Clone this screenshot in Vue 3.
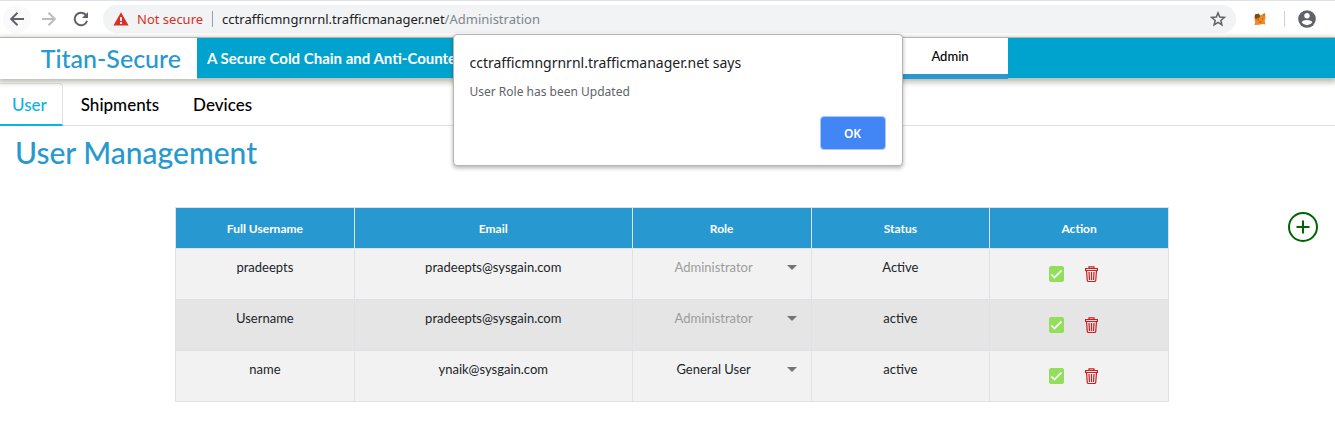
<script setup>
import { ref } from 'vue'

const tabs = ['User', 'Shipments', 'Devices']
const activeTab = ref('User')
const roles = ['Administrator', 'General User']
const users = ref([
  { name: 'pradeepts', email: 'pradeepts@sysgain.com', role: 'Administrator', status: 'Active', locked: true, confirmed: true },
  { name: 'Username', email: 'pradeepts@sysgain.com', role: 'Administrator', status: 'active', locked: true, confirmed: true },
  { name: 'name', email: 'ynaik@sysgain.com', role: 'General User', status: 'active', locked: false, confirmed: true }
])
const dialogOpen = ref(true)
</script>

<template>
  <div class="window">
    <div class="toolbar">
      <button class="tool back" aria-label="Back">
        <svg width="16" height="16" viewBox="0 0 16 16" fill="none" stroke="#5f6368" stroke-width="2"><path d="M15 8H2.5M8.5 1.7 2.2 8l6.3 6.3" /></svg>
      </button>
      <button class="tool" aria-label="Forward">
        <svg width="16" height="16" viewBox="0 0 16 16" fill="none" stroke="#babcbe" stroke-width="2"><path d="M1 8h12.5M7.5 1.7 13.8 8l-6.3 6.3" /></svg>
      </button>
      <button class="tool" aria-label="Reload">
        <svg width="16" height="16" viewBox="0 0 16 16"><path d="M13.2 4.3A6.3 6.3 0 1 0 14.1 9.8" fill="none" stroke="#5f6368" stroke-width="2" /><path d="M15 1v6H9z" fill="#5f6368" /></svg>
      </button>
      <div class="address">
        <svg class="warn" width="16" height="14" viewBox="0 0 16 14"><path d="M8 .3 15.6 13.5H.4z" fill="#d93025" /><path d="M7.1 5h1.8v4H7.1zM7.1 10.1h1.8v1.8H7.1z" fill="#fff" /></svg>
        <span class="insecure">Not secure</span>
        <span class="bar"></span>
        <span class="url">cctrafficmngrnrnl.trafficmanager.net<span class="path">/Administration</span></span>
        <button class="star" aria-label="Bookmark this page">
          <svg width="16" height="16" viewBox="0 0 16 16" fill="none" stroke="#5f6368" stroke-width="1.5"><path d="m8 1.9 1.7 4.2 4.6.35-3.5 2.950 1.100 4.400L8 11.400l-3.900 2.400 1.100-4.400-3.500-2.950 4.600-.35z" /></svg>
        </button>
      </div>
      <button class="tool fox" aria-label="Wallet extension">
        <svg width="12" height="12" viewBox="0 0 12 12"><path d="M1 1.5 4.5 1l2 1.500L11 0l.5 5-.8 3 .8 3.500-3-.5-3 .8-5 .2L1.200 9 .5 6z" fill="#f08a24" /><path d="m1 1.500 3.500-1L6.500 3 5 5 2 6 .6 4.500z" fill="#7b4a22" /><path d="m8.500 1.300 2.500-1v3L9 3.500z" fill="#d9701c" /><path d="M3.500 6.500h1.300v1H3.500zM8 5.500h1.200v1H8zM5.500 8.500h2v1h-2z" fill="#8a4b1c" /></svg>
      </button>
      <span class="divider"></span>
      <button class="tool profile" aria-label="Profile">
        <svg width="18" height="18" viewBox="0 0 18 18"><circle cx="9" cy="9" r="8.800" fill="#5f6368" /><circle cx="9" cy="5.700" r="2.700" fill="#fff" /><path d="M3.600 12.300C4.300 10.600 7 9.900 9 9.900s4.700.7 5.400 2.400A6.500 6.500 0 0 1 9 15.200a6.500 6.500 0 0 1-5.400-2.900z" fill="#fff" /></svg>
      </button>
    </div>

    <header class="banner">
      <div class="brand">Titan-Secure</div>
      <div class="tagline">A Secure Cold Chain and Anti-Counterfeit</div>
      <button class="account">Admin</button>
    </header>

    <nav class="tabs">
      <button v-for="tab in tabs" :key="tab" class="tab" :class="{ active: tab === activeTab }" @click="activeTab = tab">{{ tab }}</button>
    </nav>

    <main class="content">
      <h1>User Management</h1>
      <div class="board">
        <table>
          <thead>
            <tr>
              <th class="narrow">Full Username</th>
              <th class="wide">Email</th>
              <th class="narrow">Role</th>
              <th class="narrow">Status</th>
              <th class="narrow">Action</th>
            </tr>
          </thead>
          <tbody>
            <tr v-for="(user, i) in users" :key="i">
              <td>{{ user.name }}</td>
              <td>{{ user.email }}</td>
              <td>
                <div class="role">
                  <select v-model="user.role" :disabled="user.locked" :aria-label="'Role of ' + user.name">
                    <option v-for="role in roles" :key="role">{{ role }}</option>
                  </select>
                  <svg width="10" height="5" viewBox="0 0 10 5"><path d="M0 0h10L5 5z" fill="#757575" /></svg>
                </div>
              </td>
              <td>{{ user.status }}</td>
              <td>
                <div class="actions">
                  <label class="check">
                    <input v-model="user.confirmed" type="checkbox" :aria-label="'Confirm ' + user.name" />
                    <svg v-if="user.confirmed" width="15" height="16" viewBox="0 0 15 16" fill="none" stroke="#f2f2f2" stroke-width="1.8"><path d="m2.300 8.300 3.200 3.200 7-7" /></svg>
                  </label>
                  <button class="trash" :aria-label="'Delete ' + user.name">
                    <svg width="13" height="16" viewBox="0 0 13 16" fill="none" stroke="#cc1f1f" stroke-width="1.2"><path d="M4 2V.8h5V2M.6 2.500h11.800v2H.6zM1.500 4.500l.8 10.200.8.8h6.800l.8-.8.8-10.200" /><path d="m4 6 .5 8M6.500 6v8M9 6l-.5 8" /></svg>
                  </button>
                </div>
              </td>
            </tr>
          </tbody>
        </table>
        <button class="add" aria-label="Add user">
          <svg width="30" height="30" viewBox="0 0 30 30" fill="none" stroke="#006400" stroke-width="2"><circle cx="15" cy="15" r="14" /><path d="M15 8.500v13M8.500 15h13" /></svg>
        </button>
      </div>
    </main>

    <div v-if="dialogOpen" class="dialog" role="alertdialog" aria-labelledby="dialog-title" aria-describedby="dialog-text">
      <div id="dialog-title" class="dialog-title">cctrafficmngrnrnl.trafficmanager.net says</div>
      <p id="dialog-text">User Role has been Updated</p>
      <button class="ok" @click="dialogOpen = false">OK</button>
    </div>
  </div>
</template>

<style>
body {
  margin: 0;
  background: #fff;
}
</style>

<style scoped>
* {
  box-sizing: border-box;
}
.window {
  position: relative;
  font-family: Lato, "Liberation Sans", sans-serif;
  color: #212529;
}
button {
  font: inherit;
  padding: 0;
  border: 0;
  background: none;
  color: inherit;
}
svg {
  display: block;
  flex: none;
}
.toolbar {
  display: flex;
  align-items: center;
  height: 38px;
  padding: 0 19px 0 3px;
  border-top: 1px solid #dee1e6;
  border-bottom: 1px solid #b0b0b0;
  font-family: "Noto Sans", sans-serif;
  font-size: 13px;
}
.tool {
  display: grid;
  place-items: center;
  width: 28px;
  height: 28px;
  margin-right: 4px;
  border-radius: 50%;
}
.back {
  background: #fafafa;
}
.address {
  display: flex;
  flex: 1;
  align-items: center;
  height: 28px;
  margin-left: 4px;
  padding: 0 10px;
  border-radius: 14px;
  background: #f1f3f4;
  white-space: nowrap;
}
.insecure {
  margin-left: 8px;
  color: #d93025;
}
.bar {
  width: 1px;
  height: 16px;
  margin: 0 9px;
  background: #9aa0a6;
}
.url {
  color: #202124;
}
.path {
  color: #80868b;
}
.star {
  margin-left: auto;
}
.fox {
  margin: 0 10px;
}
.divider {
  width: 1px;
  height: 16px;
  background: #cfd1d4;
}
.profile {
  width: 18px;
  margin: 0 0 0 13px;
}
.banner {
  position: relative;
  display: flex;
  height: 40px;
  background: #00a2ce;
  box-shadow: 0 2px 6px 2px #b8b8ac;
}
.brand {
  width: 197px;
  height: 41px;
  padding-right: 16px;
  background: #fff;
  color: #2899d0;
  font-size: 25px;
  font-weight: 500;
  line-height: 40px;
  text-align: right;
}
.tagline {
  flex: 1;
  padding-left: 10px;
  color: #fff;
  font-size: 15px;
  font-weight: 700;
  line-height: 40px;
  white-space: nowrap;
}
.account {
  width: 116px;
  height: 41px;
  margin-right: 327px;
  border-bottom: 5px solid #2899d0;
  background: #fff;
  color: #000;
  font-size: 13px;
  font-weight: 500;
}
.tabs {
  display: flex;
  height: 48px;
  padding-top: 5px;
  border-bottom: 1px solid #dee2e6;
}
.tab {
  height: 43px;
  padding: 0 16px 0 18px;
  color: #000;
  font-size: 17px;
  font-weight: 500;
}
.tab.active {
  padding: 0 15px 0 12px;
  border: solid #dee2e6;
  border-width: 1px 1px 0 0;
  border-bottom: 2px solid #0ab3e0;
  border-top-right-radius: 4px;
  color: #0ab3e0;
}
.content {
  padding-bottom: 36px;
}
h1 {
  margin: 6px 15px 35px;
  color: #2899d0;
  font-size: 30px;
  font-weight: 500;
  line-height: 40px;
}
.board {
  display: flex;
  align-items: flex-start;
  justify-content: space-between;
  padding: 0 17px 0 175px;
}
table {
  flex: 1;
  border-collapse: collapse;
  table-layout: fixed;
  font-size: 13px;
  text-align: center;
}
th,
td {
  border: 1px solid #dee2e6;
}
th {
  height: 41px;
  padding: 0;
  background: #2899d0;
  color: #fff;
  font-size: 12px;
  font-weight: 700;
}
.narrow {
  width: 18%;
}
.wide {
  width: 28%;
}
td {
  height: 51px;
  padding: 10px 14px 0;
  background: #f2f2f2;
  line-height: 16px;
  vertical-align: top;
}
tbody tr:nth-child(even) td {
  background: #e5e5e5;
}
.role {
  display: flex;
  align-items: center;
  gap: 6px;
}
select {
  flex: 1;
  min-width: 0;
  padding: 0;
  border: 0;
  appearance: none;
  background: none;
  color: #212529;
  font: inherit;
  text-align: center;
  text-align-last: center;
}
select:disabled {
  color: #9c9c9c;
  opacity: 1;
}
.actions {
  display: flex;
  justify-content: center;
  gap: 21px;
  padding: 7px 12px 0 0;
}
.check {
  display: grid;
}
.check > * {
  grid-area: 1 / 1;
}
.check input {
  width: 15px;
  height: 16px;
  margin: 0;
  border: 1px solid #93de5c;
  border-radius: 2px;
  appearance: none;
}
.check input:checked {
  background: #93de5c;
}
.check svg {
  position: relative;
  pointer-events: none;
}
.add {
  margin: 5px 0 0 119px;
}
.dialog {
  position: absolute;
  top: 34px;
  left: calc(50% - 215px);
  display: flex;
  flex-direction: column;
  width: 450px;
  height: 132px;
  padding: 17px 16px 15px;
  border: 1px solid #b5b5b5;
  border-radius: 4px;
  background: #fff;
  box-shadow: 0 2px 4px rgba(0, 0, 0, 0.3);
  font-family: "Noto Sans", sans-serif;
}
.dialog-title {
  color: #202124;
  font-size: 14px;
  line-height: 22px;
}
.dialog p {
  margin: 8px 0 0;
  color: #5f6368;
  font-size: 12px;
  line-height: 20px;
}
.ok {
  align-self: flex-end;
  width: 66px;
  height: 34px;
  margin-top: auto;
  border: 1px solid #a9c7fb;
  border-radius: 4px;
  background: #4285f4;
  color: #fff;
  font-size: 12px;
  font-weight: 600;
}
</style>
